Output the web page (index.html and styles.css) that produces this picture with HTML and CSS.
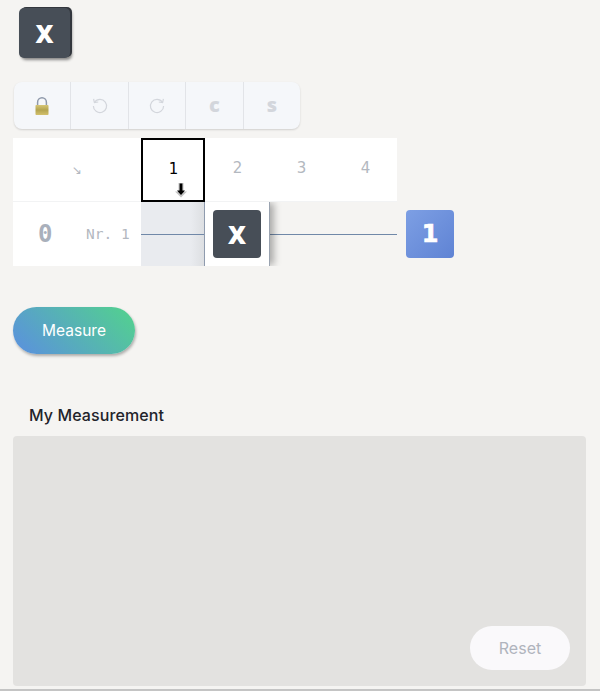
FILE: index.html
```html
<!DOCTYPE html>
<html lang="en">
<head>
  <meta charset="UTF-8">
  <title>Circuit Editor</title>
  <link rel="stylesheet" href="styles.css">
</head>
<body>

<div class="palette">
  <div class="tile tile-dark tile-stacked">X</div>
</div>

<div class="toolbar">
  <button class="tool" type="button">
    <svg width="16" height="20" viewBox="0 0 16 20">
      <defs>
        <linearGradient id="lockGold" x1="0" y1="0" x2="0" y2="1">
          <stop offset="0" stop-color="#d6c676"/>
          <stop offset="0.5" stop-color="#b3a44f"/>
          <stop offset="1" stop-color="#d3c06c"/>
        </linearGradient>
      </defs>
      <path d="M3.6 9V6.2a4.4 4.4 0 0 1 8.8 0V9" fill="none" stroke="#8f99aa" stroke-width="1.5"/>
      <rect x="1.5" y="9" width="13" height="10" rx="0.8" fill="url(#lockGold)"/>
    </svg>
  </button>
  <button class="tool" type="button">
    <svg width="18" height="18" viewBox="0 0 18 18" fill="none" stroke="#d3d6dc" stroke-width="1.2">
      <path d="M3.6 5.2A6.6 6.6 0 1 1 2.4 9"/>
      <path d="M2.6 1.8l.8 3.8 3.8-.6"/>
    </svg>
  </button>
  <button class="tool" type="button">
    <svg width="18" height="18" viewBox="0 0 18 18" fill="none" stroke="#d3d6dc" stroke-width="1.2">
      <path d="M14.4 5.2A6.6 6.6 0 1 0 15.6 9"/>
      <path d="M15.4 1.8l-.8 3.8-3.8-.6"/>
    </svg>
  </button>
  <button class="tool tool-letter" type="button">c</button>
  <button class="tool tool-letter" type="button">s</button>
</div>

<div class="board">
  <div class="head-row">
    <div class="corner">↘</div>
    <div class="step step-active">
      1
      <svg class="step-arrow" width="14" height="16" viewBox="0 0 14 16">
        <path d="M7 15.5L1 9.5h3.5V1h5v8.5H13z" fill="#c4c4c4"/>
        <path d="M7 13L3 8.5h2.6V1.5h2.8v7H11z" fill="#000"/>
      </svg>
    </div>
    <div class="step">2</div>
    <div class="step">3</div>
    <div class="step">4</div>
  </div>

  <div class="qubit-row">
    <div class="qubit-label">
      <span class="qubit-value">0</span>
      <span class="qubit-name">Nr. 1</span>
    </div>
    <div class="slots">
      <div class="wire"></div>
      <div class="slot-shaded"></div>
      <div class="slot-gate"><div class="tile tile-dark">X</div></div>
    </div>
    <div class="tile tile-blue">1</div>
  </div>
</div>

<button class="measure-btn" type="button">Measure</button>

<h2 class="section-title">My Measurement</h2>

<div class="result-panel">
  <button class="reset-btn" type="button">Reset</button>
</div>

<div class="bottom-line"></div>

</body>
</html>
```

FILE: styles.css
```css
body {
  margin: 0;
  height: 691px;
  overflow: hidden;
  padding: 8px 14px 0 13px;
  box-sizing: border-box;
  background-color: #f5f4f2;
  font-family: Inter, "Liberation Sans", sans-serif;
  position: relative;
}

.palette {
  padding-left: 6px;
  height: 50px;
}

.tile {
  width: 48px;
  height: 48px;
  border-radius: 4px;
  display: flex;
  align-items: center;
  justify-content: center;
  color: #fff;
  font-family: "Open Sans", sans-serif;
  font-weight: 800;
  font-size: 25px;
  flex-shrink: 0;
}

.tile-dark {
  background-color: #474e57;
}

.tile-stacked {
  width: 51px;
  height: 50px;
  box-sizing: border-box;
  border-radius: 5px;
  box-shadow: 2px -1px 0 #33373e, 2px 2px 3px rgba(0,0,0,0.45);
}

.tile-blue {
  margin: 8px 0 0 9px;
  background: linear-gradient(135deg, #7d9fe4, #5f83d4);
  font-family: "DejaVu Sans", sans-serif;
  font-weight: bold;
  font-size: 24px;
  -webkit-text-stroke: 0.6px #fff;
}

.toolbar {
  display: flex;
  width: 286px;
  height: 47px;
  margin: 24px 0 0 1px;
  background-color: #f5f7fa;
  border-radius: 8px;
  box-shadow: 0 1px 2px rgba(0,0,0,0.15);
  overflow: hidden;
}

.tool {
  flex: 1;
  padding: 0;
  border: none;
  border-right: 1px solid #e2e4e8;
  background: transparent;
  display: flex;
  align-items: center;
  justify-content: center;
}

.tool:last-child {
  border-right: none;
}

.tool-letter {
  color: #d3d6dc;
  font-family: "Open Sans", sans-serif;
  font-weight: 800;
  font-size: 20px;
  padding-bottom: 2px;
}

.board {
  margin-top: 9px;
}

.head-row {
  display: flex;
  width: 384px;
  height: 64px;
  background-color: #fff;
  border-bottom: 1px solid #f2f3f4;
  box-sizing: border-box;
}

.corner {
  width: 128px;
  display: flex;
  align-items: center;
  justify-content: center;
  color: #b3b8c0;
  font-family: "DejaVu Sans", sans-serif;
  font-size: 12px;
}

.step {
  width: 64px;
  display: flex;
  align-items: center;
  justify-content: center;
  padding: 0 0 3px 1px;
  box-sizing: border-box;
  color: #b3b8c0;
  font-family: "DejaVu Sans", sans-serif;
  font-size: 15px;
}

.step-active {
  position: relative;
  height: 64px;
  border: 2px solid #000;
  color: #000;
}

.step-arrow {
  position: absolute;
  left: 31px;
  bottom: 2px;
}

.qubit-row {
  display: flex;
  height: 64px;
}

.qubit-label {
  width: 128px;
  background-color: #fff;
  display: flex;
  align-items: center;
  font-family: "DejaVu Sans Mono", monospace;
  color: #b3b8c0;
}

.qubit-value {
  width: 64px;
  box-sizing: border-box;
  padding-left: 25px;
  font-size: 24px;
  font-weight: bold;
  color: #a9b0bb;
}

.qubit-name {
  padding-left: 9px;
  font-size: 14.5px;
  white-space: nowrap;
}

.slots {
  display: flex;
  width: 256px;
  position: relative;
}

.wire {
  position: absolute;
  left: 0;
  right: 0;
  top: 32px;
  height: 1px;
  background-color: #7088a8;
}

.slot-shaded {
  width: 64px;
  background: linear-gradient(90deg, #e9ebef 78%, #dcdee1);
}

.slot-gate {
  position: relative;
  width: 66px;
  margin-left: -1px;
  background-color: #fff;
  display: flex;
  align-items: center;
  justify-content: center;
  border-left: 1px solid #8f9bae;
  border-right: 1px solid #9aa3b0;
  box-shadow: 5px 0 7px -1px rgba(0,0,0,0.3);
  clip-path: inset(0 -14px 0 0);
  box-sizing: border-box;
}

.measure-btn {
  display: block;
  width: 122px;
  height: 47px;
  margin-top: 41px;
  border: none;
  border-radius: 24px;
  background: linear-gradient(45deg, #5b8fe0, #52d38c);
  box-shadow: 1px 2px 3px rgba(0,0,0,0.3);
  color: #fff;
  font-family: Inter, sans-serif;
  font-size: 15.5px;
}

.section-title {
  margin: 51px 0 11px 16px;
  font-size: 16px;
  line-height: 20px;
  font-weight: 500;
  letter-spacing: 0.1px;
  color: #22232a;
}

.result-panel {
  height: 250px;
  background-color: #e3e2e0;
  border-radius: 4px;
  display: flex;
  align-items: flex-end;
  justify-content: flex-end;
  padding: 0 16px 16px 0;
  box-sizing: border-box;
}

.reset-btn {
  width: 100px;
  height: 44px;
  border: none;
  border-radius: 22px;
  background-color: #faf9fb;
  color: #b0b4bd;
  font-family: Inter, sans-serif;
  font-size: 16px;
}

.bottom-line {
  position: absolute;
  left: 0;
  right: 0;
  bottom: 0;
  height: 2px;
  background-color: #c4c4c4;
}
```
